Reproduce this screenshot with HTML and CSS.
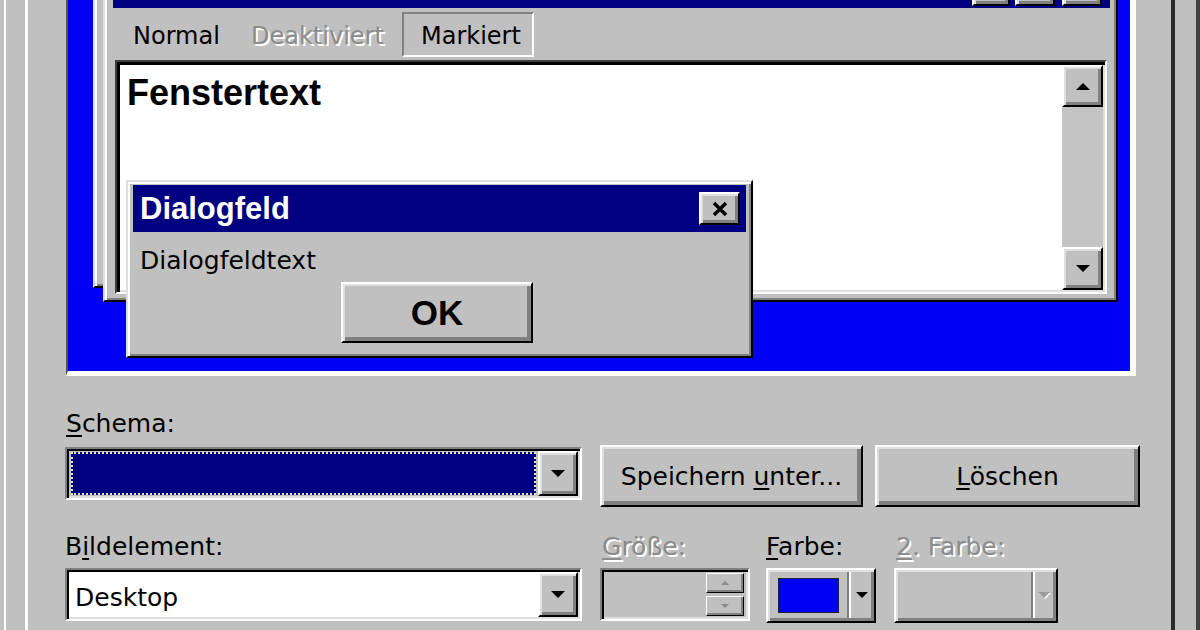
FILE: index.html
```html
<!DOCTYPE html>
<html lang="de">
<head>
<meta charset="utf-8">
<title>Eigenschaften von Anzeige – Darstellung</title>
<link rel="stylesheet" href="styles.css">
</head>
<body>
<div class="sheet">
  <div class="tab-panel">
    <div class="preview">
      <div class="pv-win pv-inactive"></div>
      <div class="pv-win pv-active">
        <div class="pv-title">
          <span class="raised pv-tbtn tb-min"></span>
          <span class="raised pv-tbtn tb-max"></span>
          <span class="raised pv-tbtn tb-close"></span>
        </div>
        <div class="pv-menu">
          <span class="pv-item it-normal">Normal</span>
          <span class="pv-item it-disabled">Deaktiviert</span>
          <span class="pv-item it-selected">Markiert</span>
        </div>
        <div class="sunken pv-textbox">
          <div class="pv-text">Fenstertext</div>
          <div class="scrollbar">
            <div class="raised sb-btn sb-up"><svg width="14" height="8" viewBox="0 0 14 8"><path d="M0 8H14L7 1Z" fill="#000"/></svg></div>
            <div class="sb-track"></div>
            <div class="raised sb-btn sb-down"><svg width="14" height="8" viewBox="0 0 14 8"><path d="M0 0H14L7 7Z" fill="#000"/></svg></div>
          </div>
        </div>
      </div>
      <div class="pv-win pv-msg">
        <div class="msg-title">
          <span class="msg-caption">Dialogfeld</span>
          <span class="raised msg-close"><svg width="18" height="16" viewBox="0 0 18 16"><path d="M3 2L15 14M15 2L3 14" stroke="#000" stroke-width="3.4" fill="none"/></svg></span>
        </div>
        <div class="msg-text">Dialogfeldtext</div>
        <div class="raised ok-btn">OK</div>
      </div>
    </div>

    <div class="controls">
      <div class="lbl"><u>S</u>chema:</div>
      <div class="row row-schema">
        <div class="sunken combo combo-schema">
          <div class="combo-sel"></div>
          <div class="raised drop-btn"><svg width="14" height="8" viewBox="0 0 14 8"><path d="M0 0H14L7 7Z" fill="#000"/></svg></div>
        </div>
        <div class="raised push btn-save"><span>Speichern <u>u</u>nter...</span></div>
        <div class="raised push btn-del"><span><u>L</u>öschen</span></div>
      </div>
      <div class="row row-item">
        <div class="field f-item">
          <div class="lbl">B<u>i</u>ldelement:</div>
          <div class="sunken combo combo-white">
            <div class="combo-text">Desktop</div>
            <div class="raised drop-btn"><svg width="14" height="8" viewBox="0 0 14 8"><path d="M0 0H14L7 7Z" fill="#000"/></svg></div>
          </div>
        </div>
        <div class="field f-size">
          <div class="lbl disabled"><u>G</u>röße:</div>
          <div class="sunken spinner">
            <div class="spin-btns">
              <div class="raised spin-btn"><svg width="8" height="5" viewBox="0 0 8 5"><path d="M0 4H8L4 0Z" fill="#8a8a8a"/></svg></div>
              <div class="raised spin-btn"><svg width="8" height="5" viewBox="0 0 8 5"><path d="M0 0H8L4 4Z" fill="#8a8a8a"/></svg></div>
            </div>
          </div>
        </div>
        <div class="field f-color">
          <div class="lbl"><u>F</u>arbe:</div>
          <div class="raised color-btn">
            <span class="swatch"></span>
            <span class="sep"></span>
            <span class="arrow"><svg width="12" height="7" viewBox="0 0 12 7"><path d="M0 0H12L6 6Z" fill="#000"/></svg></span>
          </div>
        </div>
        <div class="field f-color2">
          <div class="lbl disabled"><u>2</u>. Farbe:</div>
          <div class="raised color-btn color-btn2">
            <span class="swatch-empty"></span>
            <span class="sep"></span>
            <span class="arrow"><svg width="13" height="8" viewBox="0 0 13 8"><path d="M1 1H13L7 7Z" fill="#fff"/><path d="M0 0H12L6 6Z" fill="#9a9a9a"/></svg></span>
          </div>
        </div>
      </div>
    </div>
  </div>
</div>
</body>
</html>
```

FILE: styles.css
```css
* { box-sizing: border-box; }

html, body {
  margin: 0;
  padding: 0;
}

body {
  width: 1200px;
  height: 630px;
  overflow: hidden;
  background: #c0c0c0;
  color: #000;
  font-family: "DejaVu Sans", "Liberation Sans", sans-serif;
  font-size: 25px;
}

u {
  text-decoration-thickness: 2px;
  text-underline-offset: 3px;
}

/* bevels */
.raised {
  background: #c0c0c0;
  border: 2px solid;
  border-color: #fff #000 #000 #fff;
  box-shadow: inset 2px 2px #dfdfdf, inset -3px -3px #808080;
}

.sunken {
  border: 2px solid;
  border-color: #808080 #fff #fff #808080;
  box-shadow: inset 2px 2px #000, inset -2px -2px #dfdfdf;
}

/* outer frame */
.sheet {
  height: 630px;
  margin-left: 4px;
  border-left: 2px solid #fff;
  border-right: 4px solid #404040;
  padding-left: 19px;
  padding-right: 21px;
}

.tab-panel {
  height: 630px;
  border-left: 3px solid #fff;
  border-right: 4px solid #2a2a2a;
  padding-left: 38px;
  padding-right: 35px;
}

/* preview desktop */
.preview {
  position: relative;
  height: 376px;
  overflow: hidden;
  background: #0000f4;
  border-left: 2px solid #505050;
  border-right: 6px solid #fff;
  border-bottom: 5px solid #fff;
}

.pv-win {
  position: absolute;
  background: #c0c0c0;
  border: 2px solid;
  border-color: #dfdfdf #000 #000 #dfdfdf;
  box-shadow: inset 2px 2px #fff, inset -2px -2px #808080;
}

.pv-inactive {
  left: 25px;
  top: -80px;
  width: 1010px;
  height: 368px;
  z-index: 1;
}

.pv-active {
  left: 35px;
  top: -60px;
  width: 1015px;
  height: 362px;
  z-index: 2;
  padding: 8px 6px 6px 8px;
  display: flex;
  flex-direction: column;
}

.pv-title {
  height: 58px;
  flex: none;
  background: #000080;
  display: flex;
  justify-content: flex-end;
  align-items: flex-end;
  padding: 0 8px 2px 0;
}

.pv-tbtn {
  display: block;
  height: 34px;
}
.tb-min { width: 38px; }
.tb-max { width: 40px; margin-left: 5px; }
.tb-close { width: 40px; margin-left: 7px; }

.pv-menu {
  height: 48px;
  flex: none;
  margin-top: 2px;
  padding: 2px 0 0 20px;
  display: flex;
  align-items: flex-start;
  font-size: 24px;
}

.pv-item {
  height: 45px;
  line-height: 41px;
  padding-top: 4px;
  white-space: nowrap;
}
.it-normal { width: 118px; }
.it-disabled {
  width: 151px;
  color: #8c8c8c;
  text-shadow: 2px 2px #fff;
}
.it-selected {
  width: 132px;
  padding-left: 17px;
  line-height: 37px;
  border: 2px solid;
  border-color: #808080 #fff #fff #808080;
}

.pv-textbox {
  flex: 1;
  margin: 2px 3px 0 2px;
  background: #fff;
  border-color: #404040 #fff #fff #404040;
  box-shadow: inset 3px 3px #000, inset -2px -2px #dfdfdf;
  padding: 3px 2px 2px 3px;
  display: flex;
}

.pv-text {
  flex: 1;
  padding: 8px 0 0 7px;
  font-family: "Liberation Sans", Arial, sans-serif;
  font-weight: bold;
  font-size: 36px;
  line-height: 40px;
}

.scrollbar {
  width: 41px;
  display: flex;
  flex-direction: column;
  background: #c0c0c0;
}

.sb-btn {
  display: flex;
  align-items: center;
  justify-content: center;
}
.sb-up { height: 42px; }
.sb-down { height: 43px; }
.sb-track { flex: 1; background: #c4c4c4; }

/* message box */
.pv-msg {
  left: 58px;
  top: 180px;
  width: 627px;
  height: 178px;
  z-index: 3;
  padding: 3px 5px;
  display: flex;
  flex-direction: column;
}

.msg-title {
  height: 47px;
  flex: none;
  background: #000080;
  display: flex;
  align-items: center;
  justify-content: space-between;
  padding: 0 6px 0 7px;
}

.msg-caption {
  color: #fff;
  font-family: "Liberation Sans", Arial, sans-serif;
  font-weight: bold;
  font-size: 31px;
}

.msg-close {
  width: 41px;
  height: 33px;
  display: flex;
  align-items: center;
  justify-content: center;
}

.msg-text {
  margin-top: 14px;
  padding-left: 7px;
  line-height: 30px;
}

.ok-btn {
  align-self: center;
  margin: 6px 5px 0 0;
  width: 192px;
  height: 61px;
  display: flex;
  align-items: center;
  justify-content: center;
  font-family: "Liberation Sans", Arial, sans-serif;
  font-weight: bold;
  font-size: 35px;
  box-shadow: inset 2px 2px #dfdfdf, inset -4px -4px #808080;
}

/* lower controls */
.controls {
  padding-top: 33px;
}

.lbl {
  height: 30px;
  line-height: 30px;
  white-space: nowrap;
}

.lbl.disabled {
  color: #8c8c8c;
  text-shadow: 2px 2px #fff;
}

.row {
  display: flex;
  align-items: flex-start;
}

.row > * { flex: none; }

.row-schema { margin-top: 6px; }
.row-item { margin-top: 25px; }

.combo {
  display: flex;
  height: 53px;
  padding: 2px;
}

.combo-schema {
  width: 517px;
  margin-left: -1px;
  margin-top: 2px;
}

.combo-sel {
  flex: 1;
  margin: 1px 2px;
  background: #000080;
  border: 2px dotted #e6e6b0;
}

.combo-white { background: #fff; }

.combo-text {
  flex: 1;
  padding: 11px 0 0 6px;
  line-height: 30px;
}

.drop-btn {
  width: 40px;
  flex: none;
  display: flex;
  align-items: center;
  justify-content: center;
}

.push {
  height: 62px;
  display: flex;
  align-items: center;
  justify-content: center;
  white-space: nowrap;
  box-shadow: inset 2px 2px #dfdfdf, inset -4px -4px #808080;
}

.btn-save { width: 263px; margin-left: 18px; }
.btn-del { width: 265px; margin-left: 12px; }

.field {
  display: flex;
  flex-direction: column;
  gap: 6px;
}

.f-item { width: 517px; margin-left: -1px; }
.f-size { width: 150px; margin-left: 18px; }
.f-size .lbl { padding-left: 2px; }
.f-color { width: 110px; margin-left: 16px; }
.f-color2 { width: 164px; margin-left: 18px; }
.f-color2 .lbl { padding-left: 2px; }

.spinner {
  height: 53px;
  background: #c0c0c0;
  display: flex;
  justify-content: flex-end;
  padding: 3px 4px 2px 2px;
}

.spin-btns {
  width: 38px;
  display: flex;
  flex-direction: column;
  gap: 3px;
}

.spin-btn {
  height: 20px;
  display: flex;
  align-items: center;
  justify-content: center;
  border-width: 1px;
  box-shadow: inset -2px -2px #808080;
}

.color-btn {
  height: 55px;
  display: flex;
  align-items: center;
  padding: 0 2px 0 10px;
}

.swatch {
  width: 61px;
  height: 35px;
  flex: none;
  background: #0000f4;
  border: 1px solid #202040;
  margin-right: 8px;
}

.swatch-empty {
  width: 125px;
  flex: none;
}

.sep {
  align-self: stretch;
  flex: none;
  margin: 2px 0 3px;
  width: 4px;
  border-left: 2px solid #808080;
  border-right: 2px solid #fff;
}

.arrow {
  flex: 1;
  display: flex;
  justify-content: center;
  align-items: center;
}
```
